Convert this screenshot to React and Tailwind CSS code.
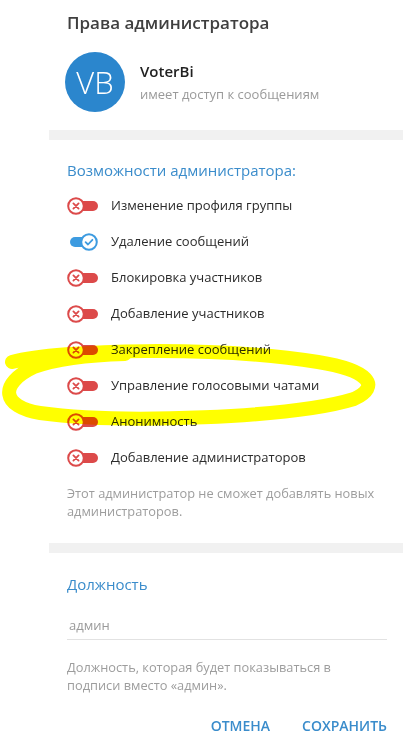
import React from "react";

const rights = [
  { label: "Изменение профиля группы", on: false },
  { label: "Удаление сообщений", on: true },
  { label: "Блокировка участников", on: false },
  { label: "Добавление участников", on: false },
  { label: "Закрепление сообщений", on: false },
  { label: "Управление голосовыми чатами", on: false },
  { label: "Анонимность", on: false },
  { label: "Добавление администраторов", on: false },
];

function Toggle({ on }) {
  if (on) {
    return (
      <div className="relative w-[31px] h-[18px] flex items-center">
        <div className="absolute left-[3px] right-[4px] h-[10px] rounded-full bg-[#3d9be0]" />
        <svg className="absolute right-0" width="18" height="18" viewBox="0 0 18 18">
          <circle cx="9" cy="9" r="7.8" fill="#fff" stroke="#3d9be0" strokeWidth="2" />
          <path d="M5.6 9.2 L8 11.5 L12.4 6.8" fill="none" stroke="#3d9be0" strokeWidth="1.8" strokeLinecap="round" strokeLinejoin="round" />
        </svg>
      </div>
    );
  }
  return (
    <div className="relative w-[31px] h-[18px] flex items-center">
      <div className="absolute left-[4px] right-0 h-[10px] rounded-full bg-[#dc4a4a]" />
      <svg className="absolute left-0" width="18" height="18" viewBox="0 0 18 18">
        <circle cx="9" cy="9" r="7.8" fill="#fff" stroke="#dc4a4a" strokeWidth="2" />
        <path d="M6.4 6.4 L11.6 11.6 M11.6 6.4 L6.4 11.6" fill="none" stroke="#dc4a4a" strokeWidth="1.8" strokeLinecap="round" />
      </svg>
    </div>
  );
}

export default function App() {
  return (
    <div
      className="relative w-[403px] h-[745px] bg-white overflow-hidden"
      style={{ fontFamily: '"Open Sans", "Noto Sans", sans-serif' }}
    >
      <div className="ml-[49px]">
        {/* Title */}
        <div className="pt-[11px] pl-[18px] text-[17px] leading-[24px] font-semibold text-[#3f3f3f]">
          Права администратора
        </div>

        {/* User */}
        <div className="flex mt-[17px] pl-[16px]">
          <div className="w-[60px] h-[60px] rounded-full bg-[#2b86cd] flex items-center justify-center text-white text-[31px] font-light leading-none">
            VB
          </div>
          <div className="ml-[15px] pt-[9px]">
            <div className="text-[15px] leading-[20px] font-semibold text-[#222]">VoterBi</div>
            <div className="mt-[4px] text-[13px] leading-[18px] text-[#9a9a9a]">имеет доступ к сообщениям</div>
          </div>
        </div>

        <div className="mt-[18px] h-[10px] bg-[#f1f1f1]" />

        {/* Rights */}
        <div className="pl-[18px]">
          <div className="mt-[20px] text-[15px] leading-[20px] font-normal text-[#3a8ccb]">
            Возможности администратора:
          </div>
          <div className="mt-[8px]">
            {rights.map((r) => (
              <div key={r.label} className="h-[36px] flex items-center">
                <Toggle on={r.on} />
                <span className="ml-[13px] text-[13px] text-[#2b2b2b]">{r.label}</span>
              </div>
            ))}
          </div>
          <p className="mt-[8px] text-[12.8px] leading-[18px] text-[#9d9d9d] pr-[16px]">
            Этот администратор не сможет добавлять новых администраторов.
          </p>
        </div>

        <div className="mt-[23px] h-[10px] bg-[#f1f1f1]" />

        {/* Rank */}
        <div className="pl-[18px] pr-[16px]">
          <div className="mt-[21px] text-[15px] leading-[20px] font-normal text-[#3a8ccb]">Должность</div>
          <div className="mt-[21px] pb-[4px] border-b border-[#e2e2e2] text-[13px] leading-[20px] text-[#9a9a9a] pl-[2px]">
            админ
          </div>
          <p className="mt-[18px] text-[12.8px] leading-[18px] text-[#9d9d9d] pr-[30px]">
            Должность, которая будет показываться в подписи вместо «админ».
          </p>
          <div className="mt-[22px] flex justify-end gap-[32px] text-[14px] leading-[20px] font-semibold text-[#3a8ccb]">
            <span>ОТМЕНА</span>
            <span>СОХРАНИТЬ</span>
          </div>
        </div>
      </div>

      {/* Hand-drawn highlight */}
      <svg className="absolute left-0 top-0 pointer-events-none mix-blend-multiply" width="403" height="745" viewBox="0 0 403 745">
        <path
          d="M 12 362 C 60 349, 220 346, 318 362 C 368 370, 382 386, 354 399 C 292 418, 120 424, 40 413 C 2 407, -2 384, 34 367 C 56 359, 90 355, 125 354"
          fill="none"
          stroke="#ffff00"
          strokeWidth="14"
          strokeLinecap="round"
          strokeLinejoin="round"
        />
      </svg>
    </div>
  );
}
